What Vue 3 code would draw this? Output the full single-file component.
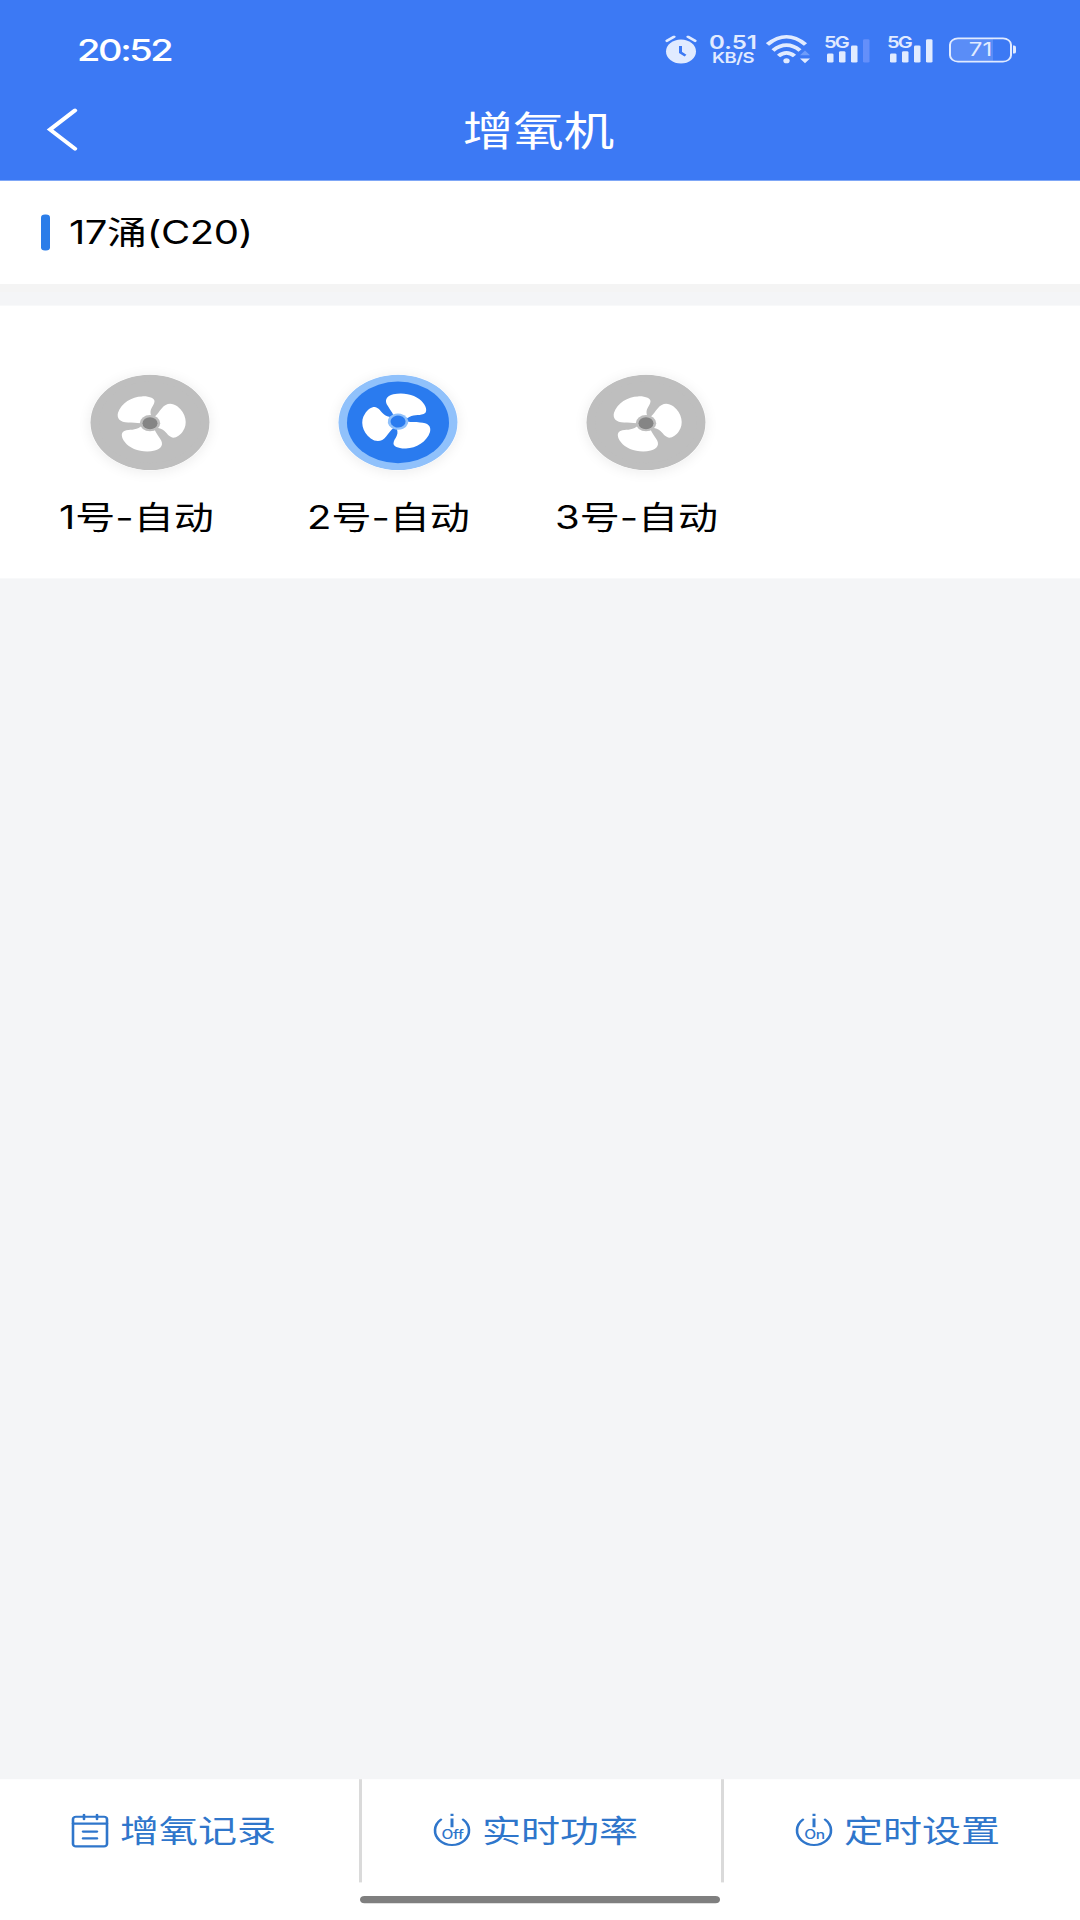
<template>
  <div class="viewport">
    <div class="page">
      <header class="header">
        <div class="status-bar">
          <span class="clock">20:52</span>
          <div class="status-icons">
            <svg class="alarm" width="32" height="36" viewBox="0 0 32 36">
              <circle cx="16" cy="20.5" r="15" fill="#e1ebff" />
              <path d="M2 7L9 2M30 7L23 2" stroke="#e1ebff" stroke-width="3.2" stroke-linecap="round" />
              <path d="M15.5 13.500V21.500L20.500 25.500" fill="none" stroke="#3c79f4" stroke-width="3" />
            </svg>
            <div class="speed">
              <span class="speed-value">0.51</span>
              <span class="speed-unit">KB/S</span>
            </div>
            <svg class="wifi" width="45" height="38" viewBox="0 0 45 38">
              <g fill="none" stroke="#e1ebff" stroke-width="4.400">
                <path d="M1.500 12.500Q20.500 -6.500 39.500 12.500" />
                <path d="M7 20Q20.500 7 34 20" />
                <path d="M12.500 27Q20.500 19 28.500 27" />
              </g>
              <circle cx="20.500" cy="33" r="3.200" fill="#e1ebff" />
              <path d="M34 26L39 20L44 26Z" fill="#6f9dfa" />
              <path d="M34 30H44L39 36Z" fill="#e1ebff" />
            </svg>
            <div v-for="(level, i) in signals" :key="i" class="signal">
              <span class="network">5G</span>
              <svg width="46" height="34" viewBox="0 0 46 34">
                <rect
                  v-for="(bar, n) in bars"
                  :key="n"
                  :x="bar.x"
                  :y="33 - bar.h"
                  width="6.500"
                  :height="bar.h"
                  rx="1.500"
                  :fill="n < level ? '#e1ebff' : '#648ffa'"
                />
              </svg>
            </div>
            <div class="battery">
              <span class="battery-level">71</span>
            </div>
          </div>
        </div>
        <div class="nav-bar">
          <svg class="back" width="34" height="58" viewBox="0 0 34 58">
            <path d="M29 5L4 29L29 53" fill="none" stroke="#fff" stroke-width="4.500" stroke-linecap="round" />
          </svg>
          <h1 class="title">增氧机</h1>
        </div>
      </header>

      <section class="pond">
        <span class="pond-mark"></span>
        <span class="pond-name">17涌(C20)</span>
      </section>

      <section class="devices">
        <div v-for="device in devices" :key="device.name" class="device">
          <svg :class="['fan', { on: device.on }]" width="120" height="120" viewBox="-60 -60 120 120">
            <circle class="fan-ring" r="59.500" />
            <circle class="fan-disc" r="51" />
            <g :transform="device.on ? 'translate(0 -1) rotate(60)' : 'translate(0 1)'">
              <path
                v-for="angle in [0, 120, 240]"
                :key="angle"
                :transform="`rotate(${angle})`"
                d="M0 0L-9 0C-14 -1 -17 -0.500 -22 -1C-30 -1 -33.500 -6 -32 -13C-29 -25 -18 -33.500 -8 -33.500C-1 -34 5 -31 4.500 -27C4 -21 -1 -18 1 -10Z"
                fill="#fff"
              />
              <circle class="hub-ring" r="10.200" />
              <circle class="hub" r="7.500" />
            </g>
          </svg>
          <span class="device-name">{{ device.name }}</span>
        </div>
      </section>

      <footer class="footer">
        <nav class="tabs">
          <a v-for="tab in tabs" :key="tab.label" class="tab">
            <svg class="tab-icon" width="38" height="44" viewBox="0 0 38 44">
              <g v-if="tab.icon === 'record'" fill="none" stroke="#2f76cb" stroke-width="2.600" stroke-linecap="round">
                <rect x="2" y="4" width="34" height="37" rx="3" />
                <path d="M2 12.500H36M13 1.500V7M26 1.500V7M12 22.500H26M12 31H26" />
              </g>
              <g v-else>
                <path
                  d="M8 7.500A17 18 0 1 0 30 7.500"
                  fill="none"
                  stroke="#2f76cb"
                  stroke-width="2.600"
                  stroke-linecap="round"
                />
                <path d="M19 0V3M19 6V17" stroke="#2f76cb" stroke-width="3" />
                <text class="tab-state" x="19.500" y="32" text-anchor="middle">{{ tab.icon }}</text>
              </g>
            </svg>
            <span class="tab-label">{{ tab.label }}</span>
          </a>
        </nav>
        <div class="home-bar"></div>
      </footer>
    </div>
  </div>
</template>

<script setup>
const signals = [3, 4];

const bars = [
  { x: 3, h: 11 },
  { x: 15, h: 14 },
  { x: 27, h: 21 },
  { x: 39, h: 29 }
];

const devices = [
  { name: '1号-自动', on: false },
  { name: '2号-自动', on: true },
  { name: '3号-自动', on: false }
];

const tabs = [
  { label: '增氧记录', icon: 'record' },
  { label: '实时功率', icon: 'Off' },
  { label: '定时设置', icon: 'On' }
];
</script>

<style>
body {
  margin: 0;
}
</style>

<style scoped>
.viewport {
  width: 1080px;
  height: 1920px;
  overflow: hidden;
}

/* 1080x2400 layout fitted into a 1920px high window */
.page {
  width: 1080px;
  height: 2400px;
  display: flex;
  flex-direction: column;
  transform: scaleY(0.8);
  transform-origin: 0 0;
  background: #f4f5f7;
  font-family: Inter, 'Noto Sans CJK SC', sans-serif;
  color: #000;
}

.header {
  height: 226px;
  flex-shrink: 0;
  background: #3c79f4;
  color: #fff;
}

.status-bar {
  height: 99px;
  box-sizing: border-box;
  padding: 25px 68px 0 77px;
  display: flex;
  justify-content: space-between;
  align-items: center;
}

.clock {
  font-size: 38px;
  font-weight: 500;
  letter-spacing: -2.4px;
}

.status-icons {
  display: flex;
  align-items: center;
  color: #e1ebff;
}

.speed {
  width: 48px;
  margin-left: 12px;
  display: flex;
  flex-direction: column;
  align-items: center;
  font-weight: 600;
}

.speed-value {
  font-size: 24px;
  line-height: 20px;
}

.speed-unit {
  font-size: 18.5px;
  line-height: 19px;
  letter-spacing: -0.5px;
}

.wifi {
  margin-left: 9px;
}

.signal {
  position: relative;
  width: 46px;
  height: 34px;
  margin-left: 13px;
}

.signal + .signal {
  margin-left: 17px;
}

.network {
  position: absolute;
  left: 0;
  top: 0;
  font-size: 20px;
  line-height: 16px;
  font-weight: 600;
  letter-spacing: -1.9px;
}

.battery {
  position: relative;
  width: 63px;
  height: 31px;
  box-sizing: border-box;
  margin-left: 16px;
  border: 2.5px solid #e1ebff;
  border-radius: 9px;
  background: linear-gradient(90deg, #5a8df7 71%, transparent 71%);
  display: flex;
  align-items: center;
  justify-content: center;
}

.battery::after {
  content: '';
  position: absolute;
  right: -6px;
  top: 8px;
  width: 3px;
  height: 10px;
  border-radius: 0 2px 2px 0;
  background: #e1ebff;
}

.battery-level {
  font-size: 24px;
  line-height: 26px;
}

.nav-bar {
  position: relative;
  height: 127px;
  display: flex;
  align-items: center;
  justify-content: center;
}

.back {
  position: absolute;
  left: 46px;
  top: 34px;
}

.title {
  margin: 2px 3px 0 0;
  font-size: 50.5px;
  line-height: 60px;
  font-weight: 400;
}

.pond {
  height: 129px;
  flex-shrink: 0;
  box-sizing: border-box;
  padding: 0 41px;
  display: flex;
  align-items: center;
  background: #fff;
  box-shadow: 0 10px 0 #f4f4f4;
}

.pond-mark {
  width: 9px;
  height: 45px;
  border-radius: 4px;
  background: #2b7de9;
}

.pond-name {
  margin-left: 19px;
  font-size: 40px;
  line-height: 50px;
  letter-spacing: -0.4px;
}

.devices {
  height: 341px;
  flex-shrink: 0;
  box-sizing: border-box;
  margin-top: 27px;
  padding: 86px 0 0 59px;
  display: flex;
  background: #fff;
}

.device {
  width: 248px;
  display: flex;
  flex-direction: column;
}

.fan {
  margin-left: 31px;
  border-radius: 50%;
  box-shadow: 0 2px 14px rgba(0, 0, 0, 0.08);
}

.fan-ring,
.fan-disc,
.hub-ring {
  fill: #bebebe;
}

.hub {
  fill: #858585;
}

.on .fan-ring,
.on .hub-ring {
  fill: #90c1fb;
}

.on .fan-disc,
.on .hub {
  fill: #2a7bef;
}

.device-name {
  margin-top: 34px;
  font-size: 40px;
  line-height: 50px;
}

.footer {
  height: 176px;
  flex-shrink: 0;
  margin-top: auto;
  background: #fff;
}

.tabs {
  display: flex;
  height: 129px;
}

.tab {
  width: 362px;
  flex-shrink: 0;
  box-sizing: border-box;
  padding-left: 71px;
  display: flex;
  align-items: center;
  color: #2f76cb;
}

.tab:last-child {
  width: 356px;
}

.tab:not(:last-child) {
  border-right: 3px solid #dadada;
}

.tab-state {
  font-size: 15.5px;
  font-weight: 500;
  letter-spacing: -0.3px;
  fill: #2f76cb;
}

.tab-label {
  margin: 1px 0 0 11px;
  font-size: 39px;
  line-height: 50px;
  white-space: nowrap;
}

.home-bar {
  width: 360px;
  height: 9px;
  margin: 17px auto 0;
  border-radius: 5px;
  background: #7f7f7f;
}
</style>
